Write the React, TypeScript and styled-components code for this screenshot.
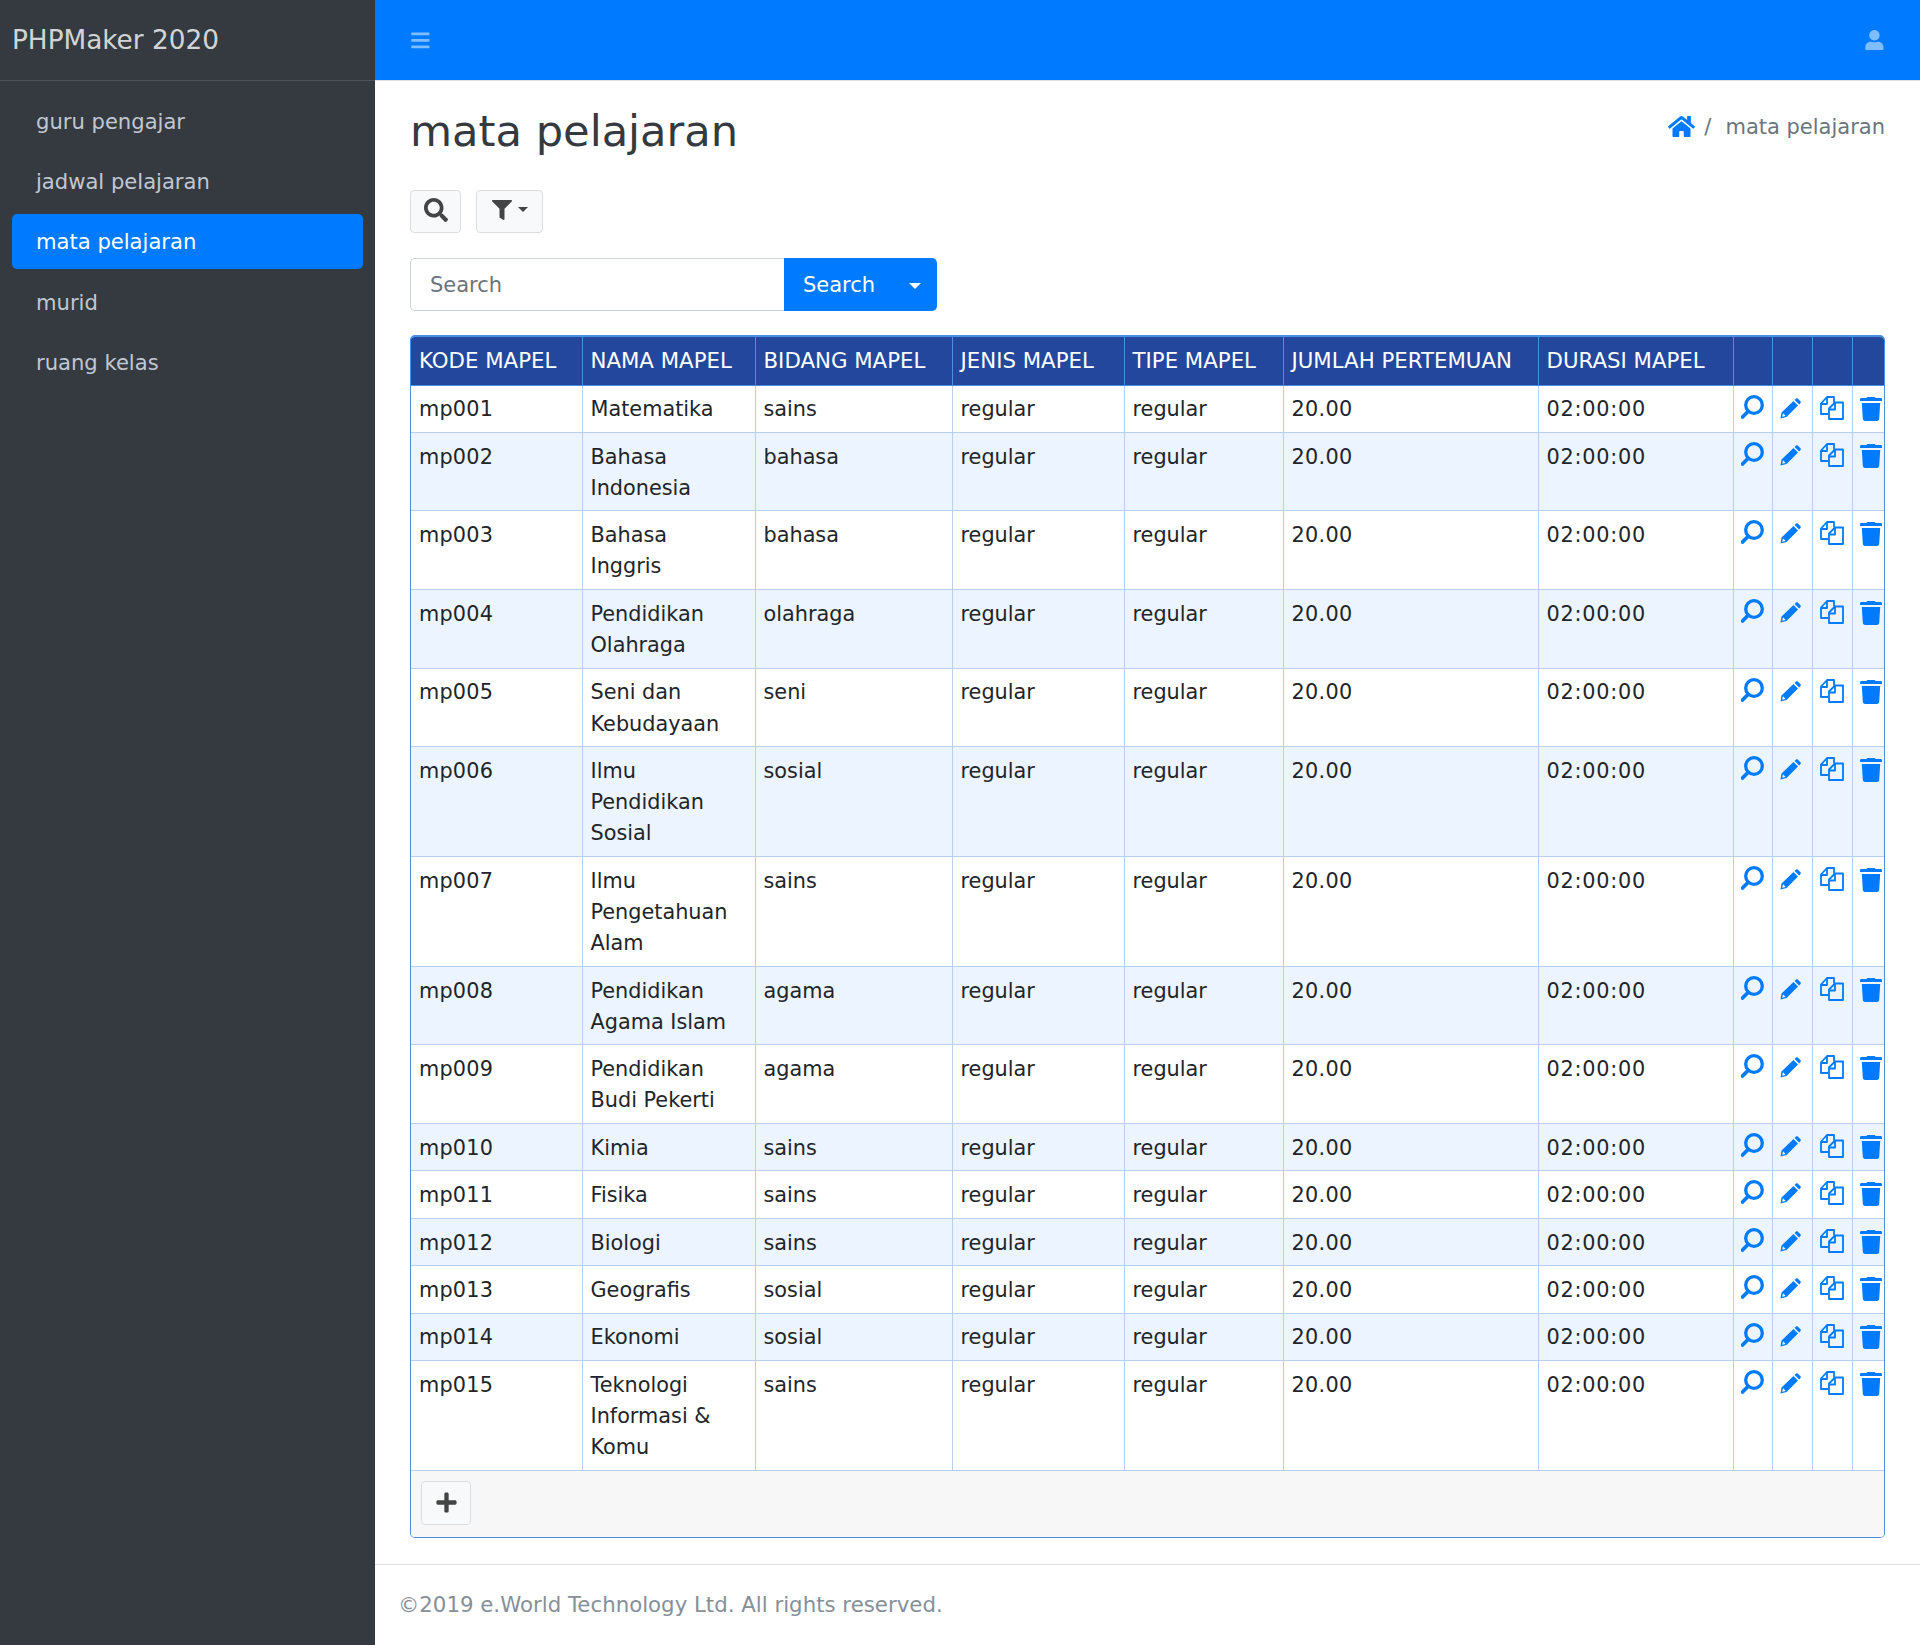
import { FaBars, FaFilter, FaHome, FaPlus, FaSearch, FaUser } from "react-icons/fa";
import styled, { createGlobalStyle } from "styled-components";

const GlobalStyle = createGlobalStyle`
  html, body {
    margin: 0;
    padding: 0;
    background: #fff;
  }
  body {
    font-family: "DejaVu Sans", sans-serif;
    font-size: 20.8px;
    line-height: 31.2px;
    color: #212529;
  }
  * {
    box-sizing: border-box;
  }
`;

const Wrapper = styled.div`
  display: flex;
  min-height: 1645px;
`;

const Sidebar = styled.aside`
  width: 375px;
  flex-shrink: 0;
  background-color: #343a40;
`;

const Brand = styled.div`
  height: 81px;
  padding: 2px 12px 0;
  display: flex;
  align-items: center;
  border-bottom: 1px solid #4b545c;
  color: rgba(255, 255, 255, 0.8);
  font-size: 26.3px;
`;

const Nav = styled.ul`
  list-style-type: none;
  margin: 0;
  padding: 12px 12px 0;
  display: flex;
  flex-direction: column;
  gap: 5.3px;
`;

const NavItem = styled.li<{ $active?: boolean }>`
  height: 55px;
  padding: 2px 24px 0;
  display: flex;
  align-items: center;
  width: 351px;
  border-radius: 5px;
  font-size: 21.1px;
  background-color: ${(props) => (props.$active ? "#007bff" : "transparent")};
  color: ${(props) => (props.$active ? "#fff" : "#c2c7d0")};
`;

const Main = styled.div`
  flex: 1;
  min-width: 0;
  display: flex;
  flex-direction: column;
`;

const Topbar = styled.header`
  height: 81px;
  padding: 0 35px;
  display: flex;
  align-items: center;
  justify-content: space-between;
  background-color: #007bff;
  border-bottom: 1px solid #dee2e6;
  color: rgba(255, 255, 255, 0.5);
  font-size: 20.8px;
  svg {
    display: block;
  }
`;

const Content = styled.main`
  flex: 1;
  padding: 0 35px;
`;

const PageHeader = styled.div`
  height: 109px;
  display: flex;
  align-items: flex-start;
  justify-content: space-between;
`;

const Title = styled.h1`
  margin: 25px 0 0;
  font-size: 43.2px;
  line-height: 50px;
  font-weight: 400;
  color: #343a40;
`;

const Breadcrumb = styled.div`
  margin-top: 31px;
  display: flex;
  align-items: center;
  font-size: 21px;
  color: #6c757d;
  svg {
    color: #007bff;
    font-size: 27px;
    margin-top: -3px;
  }
`;

const Divider = styled.span`
  margin: 0 14px 0 9px;
`;

const Toolbar = styled.div`
  display: flex;
  align-items: flex-start;
  gap: 15px;
  height: 44px;
`;

const ToolButton = styled.button<{ $wide?: boolean }>`
  width: ${(props) => (props.$wide ? "67px" : "51px")};
  height: 43px;
  padding: 0 0 4px;
  display: flex;
  align-items: center;
  justify-content: center;
  gap: 6px;
  background-color: #f8f9fa;
  border: 1px solid #ddd;
  border-radius: 4px;
  color: #444;
  font-size: ${(props) => (props.$wide ? "20px" : "24px")};
`;

const Caret = styled.span<{ $color?: string; $size?: number }>`
  display: inline-block;
  border-top: ${(props) => props.$size || 5}px solid ${(props) => props.$color || "#444"};
  border-left: ${(props) => props.$size || 5}px solid transparent;
  border-right: ${(props) => props.$size || 5}px solid transparent;
`;

const SearchGroup = styled.div`
  margin-top: 24px;
  width: 527px;
  height: 53px;
  display: flex;
`;

const SearchInput = styled.div`
  width: 374px;
  padding: 2px 19px 0;
  display: flex;
  align-items: center;
  border: 1px solid #ced4da;
  border-right: none;
  border-radius: 5px 0 0 5px;
  font-size: 21px;
  color: #6c757d;
`;

const SearchButton = styled.div`
  flex: 1;
  padding: 2px 16px 0 19px;
  display: flex;
  align-items: center;
  justify-content: space-between;
  background-color: #007bff;
  border-radius: 0 5px 5px 0;
  font-size: 21px;
  color: #fff;
`;

const Card = styled.div`
  margin-top: 24px;
  width: 1475px;
  border: 1px solid #4a90e2;
  border-top-width: 2px;
  border-radius: 5px;
  overflow: hidden;
`;

const Table = styled.table`
  width: 100%;
  table-layout: fixed;
  border-collapse: collapse;
`;

const Th = styled.th`
  height: 48px;
  padding: 0 8px;
  text-align: left;
  font-size: 21.3px;
  font-weight: 400;
  background-color: #24479e;
  color: #fff;
  white-space: nowrap;
  border-left: 1px solid #4a90e2;
  border-bottom: 1px solid #4a90e2;
  &:first-child {
    border-left: none;
  }
`;

const Row = styled.tr<{ $odd: boolean }>`
  background-color: ${(props) => (props.$odd ? "#fff" : "#ebf4ff")};
`;

const Td = styled.td<{ $spacing?: number; $wrapEarly?: boolean }>`
  padding: 8.8px ${(props) => (props.$wrapEarly ? "14px" : "8px")} 6.4px 8px;
  vertical-align: top;
  letter-spacing: ${(props) => props.$spacing || 0}px;
  border-left: 1px solid #b8d0ef;
  border-bottom: 1px solid #b8d0ef;
  &:first-child {
    border-left: none;
  }
`;

const ActionTd = styled.td<{ $top: number }>`
  padding: ${(props) => props.$top}px 0 0 7px;
  vertical-align: top;
  border-left: 1px solid #b8d0ef;
  border-bottom: 1px solid #b8d0ef;
  color: #007bff;
  svg {
    display: block;
  }
`;

const CardFooter = styled.div`
  height: 66.5px;
  padding: 10px 10px;
  background-color: #f7f7f7;
`;

const AddButton = styled.button`
  width: 50px;
  height: 44px;
  padding: 0;
  display: flex;
  align-items: center;
  justify-content: center;
  background-color: #f8f9fa;
  border: 1px solid #ddd;
  border-radius: 4px;
  color: #444;
  font-size: 23px;
`;

const Footer = styled.footer`
  height: 81px;
  margin-top: 23px;
  padding: 0 23px;
  display: flex;
  align-items: center;
  border-top: 1px solid #dee2e6;
  font-size: 21.3px;
  color: #869099;
`;

const ViewIcon = () => (
  <svg width="24" height="24" viewBox="1 0 24 24" fill="none" stroke="currentColor">
    <circle cx="14" cy="10" r="8.300" strokeWidth="3.300" />
    <path d="M8 16.500 2.500 22" strokeWidth="3.800" strokeLinecap="round" />
  </svg>
);

const EditIcon = () => (
  <svg width="21" height="21" viewBox="0 0 21 21" fill="currentColor">
    <path d="M16 .5c.6-.5 1.200-.5 1.700 0l2.800 2.800c.5.500.5 1.100 0 1.700l-1.400 1.400-4.500-4.500z" />
    <path
      fillRule="evenodd"
      d="M13.500 3 18 7.500 6.500 19 .5 20.500 1.500 14.500zM3 15.300l-.8 3.500 3.500-.8z"
    />
  </svg>
);

const CopyIcon = () => (
  <svg width="24" height="24" viewBox="0 0 24 24" fill="none" stroke="currentColor" strokeWidth="1.800" strokeLinejoin="round">
    <path d="M8 18H1V7.500L7 1h7v5.500" />
    <path d="M7 1.500V8H1.500" />
    <path d="M9 12.500 15 6.500h8V23H9z" />
    <path d="M15 7v6.500H9.500" />
  </svg>
);

const TrashIcon = () => (
  <svg width="22" height="24" viewBox="0 0 22 24" fill="currentColor">
    <path d="M7.500 0h7c.5 0 .8.300.8 1h5.400c.7 0 1.300.6 1.300 1.300V4H0V2.300C0 1.600.6 1 1.300 1h5.400c0-.7.300-1 .8-1z" />
    <path d="M1.800 6h18.400l-1 15.800c-.1 1.300-1 2.200-2.200 2.200H5c-1.200 0-2.100-.9-2.200-2.200z" />
  </svg>
);

const columns = [
  { label: "KODE MAPEL", width: 171 },
  { label: "NAMA MAPEL", width: 173 },
  { label: "BIDANG MAPEL", width: 197 },
  { label: "JENIS MAPEL", width: 172 },
  { label: "TIPE MAPEL", width: 159 },
  { label: "JUMLAH PERTEMUAN", width: 255 },
  { label: "DURASI MAPEL", width: 195 },
  { label: "", width: 39 },
  { label: "", width: 40 },
  { label: "", width: 40 },
  { label: "", width: 32 },
];

const subjects = [
  ["mp001", "Matematika", "sains"],
  ["mp002", "Bahasa Indonesia", "bahasa"],
  ["mp003", "Bahasa Inggris", "bahasa"],
  ["mp004", "Pendidikan Olahraga", "olahraga"],
  ["mp005", "Seni dan Kebudayaan", "seni"],
  ["mp006", "Ilmu Pendidikan Sosial", "sosial"],
  ["mp007", "Ilmu Pengetahuan Alam", "sains"],
  ["mp008", "Pendidikan Agama Islam", "agama"],
  ["mp009", "Pendidikan Budi Pekerti", "agama"],
  ["mp010", "Kimia", "sains"],
  ["mp011", "Fisika", "sains"],
  ["mp012", "Biologi", "sains"],
  ["mp013", "Geografis", "sosial"],
  ["mp014", "Ekonomi", "sosial"],
  ["mp015", "Teknologi Informasi & Komu", "sains"],
];

const menu = ["guru pengajar", "jadwal pelajaran", "mata pelajaran", "murid", "ruang kelas"];

function App() {
  return (
    <Wrapper>
      <GlobalStyle />
      <Sidebar>
        <Brand>PHPMaker 2020</Brand>
        <Nav>
          {menu.map((item) => (
            <NavItem key={item} $active={item === "mata pelajaran"}>
              {item}
            </NavItem>
          ))}
        </Nav>
      </Sidebar>
      <Main>
        <Topbar>
          <FaBars />
          <FaUser />
        </Topbar>
        <Content>
          <PageHeader>
            <Title>mata pelajaran</Title>
            <Breadcrumb>
              <FaHome />
              <Divider>/</Divider>
              mata pelajaran
            </Breadcrumb>
          </PageHeader>
          <Toolbar>
            <ToolButton>
              <FaSearch />
            </ToolButton>
            <ToolButton $wide>
              <FaFilter />
              <Caret />
            </ToolButton>
          </Toolbar>
          <SearchGroup>
            <SearchInput>Search</SearchInput>
            <SearchButton>
              Search
              <Caret $color="#fff" $size={6} />
            </SearchButton>
          </SearchGroup>
          <Card>
            <Table>
              <colgroup>
                {columns.map((col, i) => (
                  <col key={i} width={col.width} />
                ))}
              </colgroup>
              <thead>
                <tr>
                  {columns.map((col, i) => (
                    <Th key={i}>{col.label}</Th>
                  ))}
                </tr>
              </thead>
              <tbody>
                {subjects.map(([code, name, field], i) => (
                  <Row key={code} $odd={i % 2 === 0}>
                    <Td $spacing={0.2}>{code}</Td>
                    <Td $wrapEarly>{name}</Td>
                    <Td>{field}</Td>
                    <Td>regular</Td>
                    <Td>regular</Td>
                    <Td $spacing={0.3}>20.00</Td>
                    <Td $spacing={0.75}>02:00:00</Td>
                    <ActionTd $top={9}>
                      <ViewIcon />
                    </ActionTd>
                    <ActionTd $top={12}>
                      <EditIcon />
                    </ActionTd>
                    <ActionTd $top={10}>
                      <CopyIcon />
                    </ActionTd>
                    <ActionTd $top={11}>
                      <TrashIcon />
                    </ActionTd>
                  </Row>
                ))}
              </tbody>
            </Table>
            <CardFooter>
              <AddButton>
                <FaPlus />
              </AddButton>
            </CardFooter>
          </Card>
        </Content>
        <Footer>©2019 e.World Technology Ltd. All rights reserved.</Footer>
      </Main>
    </Wrapper>
  );
}

export default App;
